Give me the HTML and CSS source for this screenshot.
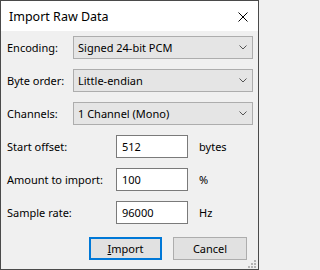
FILE: index.html
```html
<!DOCTYPE html>
<html>
<head>
<meta charset="utf-8">
<link rel="stylesheet" href="styles.css">
</head>
<body>
<div class="window">
  <div class="titlebar">
    <span class="title">Import Raw Data</span>
    <svg class="close" width="10" height="10" viewBox="0 0 10 10"><path d="M0.5 0.5 L9.5 9.5 M9.5 0.5 L0.5 9.5" stroke="#000" stroke-width="1" fill="none"/></svg>
  </div>
  <div class="content">
    <div class="combos">
      <label class="lbl">Encoding:</label>
      <div class="combo"><span>Signed 24-bit PCM</span><svg class="chev" width="8" height="5" viewBox="0 0 8 5"><path d="M0.5 0.5 L4 4 L7.5 0.5" stroke="#555" fill="none"/></svg></div>
      <label class="lbl">Byte order:</label>
      <div class="combo"><span>Little-endian</span><svg class="chev" width="8" height="5" viewBox="0 0 8 5"><path d="M0.5 0.5 L4 4 L7.5 0.5" stroke="#555" fill="none"/></svg></div>
      <label class="lbl">Channels:</label>
      <div class="combo"><span>1 Channel (Mono)</span><svg class="chev" width="8" height="5" viewBox="0 0 8 5"><path d="M0.5 0.5 L4 4 L7.5 0.5" stroke="#555" fill="none"/></svg></div>
    </div>
    <div class="fields">
      <label class="lbl">Start offset:</label>
      <div class="edit">512</div>
      <span class="unit">bytes</span>
      <label class="lbl">Amount to import:</label>
      <div class="edit">100</div>
      <span class="unit">%</span>
      <label class="lbl">Sample rate:</label>
      <div class="edit">96000</div>
      <span class="unit">Hz</span>
    </div>
    <div class="buttons">
      <div class="btn default"><span class="u">I</span>mport</div>
      <div class="btn">Cancel</div>
    </div>
  </div>
  <svg class="grip" width="8" height="8" viewBox="0 0 8 8">
    <rect x="6" y="0" width="2" height="2" fill="#b4b4b4"/>
    <rect x="3" y="3" width="2" height="2" fill="#b4b4b4"/>
    <rect x="6" y="3" width="2" height="2" fill="#b4b4b4"/>
    <rect x="0" y="6" width="2" height="2" fill="#b4b4b4"/>
    <rect x="3" y="6" width="2" height="2" fill="#b4b4b4"/>
    <rect x="6" y="6" width="2" height="2" fill="#b4b4b4"/>
  </svg>
</div>
</body>
</html>
```
FILE: styles.css
```css
html, body {
  margin: 0;
  padding: 0;
  background: #f0f0f0;
}
body {
  font-family: "Noto Sans", "Liberation Sans", sans-serif;
  font-size: 11px;
  color: #000;
}
.window {
  position: relative;
  box-sizing: border-box;
  width: 259px;
  height: 270px;
  border: 1px solid #4a4a4a;
  background: #f0f0f0;
  display: flex;
  flex-direction: column;
}
.titlebar {
  height: 30px;
  background: #fff;
  display: flex;
  align-items: center;
  justify-content: space-between;
  padding: 0 10px 0 8px;
}
.title {
  font-size: 12.5px;
  line-height: 16px;
  margin-top: 1px;
}
.close {
  display: block;
  margin-top: 1px;
}
.content {
  padding: 5px 5px 0 6px;
  display: flex;
  flex-direction: column;
}
.combos {
  display: grid;
  grid-template-columns: 66px 180px;
  row-gap: 10px;
  align-items: center;
}
.lbl {
  line-height: 16px;
  white-space: nowrap;
}
.combo {
  box-sizing: border-box;
  height: 23px;
  border: 1px solid #adadad;
  background: #e5e5e5;
  display: flex;
  align-items: center;
  justify-content: space-between;
  padding: 0 5px 0 4px;
}
.chev {
  display: block;
}
.fields {
  margin-top: 10px;
  display: grid;
  grid-template-columns: 109px 72px auto;
  row-gap: 10px;
  align-items: center;
}
.edit {
  box-sizing: border-box;
  height: 23px;
  border: 1px solid #7a7a7a;
  background: #fff;
  padding: 0 5px;
  line-height: 21px;
}
.unit {
  padding-left: 11px;
}
.buttons {
  margin-top: 13px;
  display: flex;
  justify-content: flex-end;
  gap: 11px;
  padding-right: 6px;
}
.btn {
  box-sizing: border-box;
  height: 23px;
  width: 74px;
  border: 1px solid #adadad;
  background: #e1e1e1;
  text-align: center;
  line-height: 21px;
}
.btn.default {
  width: 73px;
  border: 2px solid #0078d7;
  line-height: 19px;
}
.u {
  text-decoration: underline;
}
.grip {
  position: absolute;
  right: 2px;
  bottom: 1px;
}
```
